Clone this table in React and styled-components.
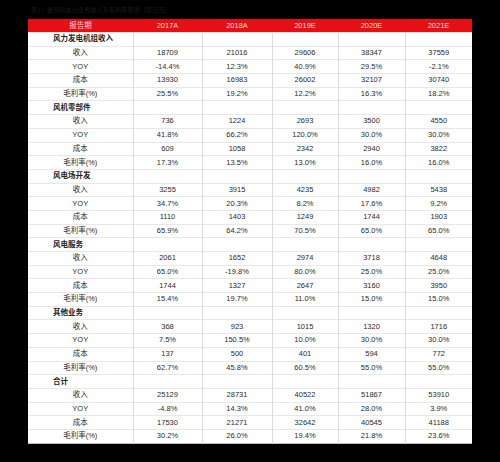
import React from "react"
import styled, { createGlobalStyle } from "styled-components"

const GlobalStyle = createGlobalStyle`
html, body {
  margin: 0;
  padding: 0;
  background: #000;
}
body {
  font-family: "Liberation Sans", "Noto Sans CJK SC", sans-serif;
}
`

const years = ["2017A", "2018A", "2019E", "2020E", "2021E"]
const colWidths = [105, 69, 70, 66, 67, 67]

const sections = [
  {
    name: "风力发电机组收入",
    rows: [
      ["收入", "18709", "21016", "29606", "38347", "37559"],
      ["YOY", "-14.4%", "12.3%", "40.9%", "29.5%", "-2.1%"],
      ["成本", "13930", "16983", "26002", "32107", "30740"],
      ["毛利率(%)", "25.5%", "19.2%", "12.2%", "16.3%", "18.2%"],
    ],
  },
  {
    name: "风机零部件",
    rows: [
      ["收入", "736", "1224", "2693", "3500", "4550"],
      ["YOY", "41.8%", "66.2%", "120.0%", "30.0%", "30.0%"],
      ["成本", "609", "1058", "2342", "2940", "3822"],
      ["毛利率(%)", "17.3%", "13.5%", "13.0%", "16.0%", "16.0%"],
    ],
  },
  {
    name: "风电场开发",
    rows: [
      ["收入", "3255", "3915", "4235", "4982", "5438"],
      ["YOY", "34.7%", "20.3%", "8.2%", "17.6%", "9.2%"],
      ["成本", "1110", "1403", "1249", "1744", "1903"],
      ["毛利率(%)", "65.9%", "64.2%", "70.5%", "65.0%", "65.0%"],
    ],
  },
  {
    name: "风电服务",
    rows: [
      ["收入", "2061", "1652", "2974", "3718", "4648"],
      ["YOY", "65.0%", "-19.8%", "80.0%", "25.0%", "25.0%"],
      ["成本", "1744", "1327", "2647", "3160", "3950"],
      ["毛利率(%)", "15.4%", "19.7%", "11.0%", "15.0%", "15.0%"],
    ],
  },
  {
    name: "其他业务",
    rows: [
      ["收入", "368", "923", "1015", "1320", "1716"],
      ["YOY", "7.5%", "150.5%", "10.0%", "30.0%", "30.0%"],
      ["成本", "137", "500", "401", "594", "772"],
      ["毛利率(%)", "62.7%", "45.8%", "60.5%", "55.0%", "55.0%"],
    ],
  },
  {
    name: "合计",
    rows: [
      ["收入", "25129", "28731", "40522", "51867", "53910"],
      ["YOY", "-4.8%", "14.3%", "41.0%", "28.0%", "3.9%"],
      ["成本", "17530", "21271", "32642", "40545", "41188"],
      ["毛利率(%)", "30.2%", "26.0%", "19.4%", "21.8%", "23.6%"],
    ],
  },
]

export default function App() {
  return (
    <Page>
      <GlobalStyle />
      <Caption>表1：金风科技分业务收入及毛利率预测（百万元）</Caption>
      <Table>
        <colgroup>
          {colWidths.map((w, i) => (
            <col key={i} style={{ width: w }} />
          ))}
        </colgroup>
        <thead>
          <HeadRow>
            <HeadCell>报告期</HeadCell>
            {years.map((y) => (
              <HeadCell key={y}>{y}</HeadCell>
            ))}
          </HeadRow>
        </thead>
        <tbody>
          {sections.map((s) => (
            <React.Fragment key={s.name}>
              <Row>
                <SectionCell>{s.name}</SectionCell>
                {years.map((y) => (
                  <Cell key={y} />
                ))}
              </Row>
              {s.rows.map((r, i) => (
                <Row key={i}>
                  {r.map((v, j) => (
                    <Cell key={j}>{v}</Cell>
                  ))}
                </Row>
              ))}
            </React.Fragment>
          ))}
        </tbody>
      </Table>
    </Page>
  )
}

const Page = styled.div`
width: 500px;
height: 462px;
background: #000;
padding-left: 28px;
box-sizing: border-box;
`
const Caption = styled.div`
height: 19px;
line-height: 19px;
padding-left: 3px;
font-size: 6.2px;
color: #1c1c1c;
white-space: nowrap;
`
const Table = styled.table`
width: 444px;
border-collapse: collapse;
table-layout: fixed;
background: #fff;
border-bottom: 1px solid #bdbdbd;
`
const HeadRow = styled.tr`
height: 13px;
background: #e50f14;
`
const HeadCell = styled.th`
padding: 0;
font-size: 7.5px;
font-weight: normal;
color: #fbd6d6;
text-align: center;
line-height: 13px;
`
const Row = styled.tr`
height: 13.7px;
`
const Cell = styled.td`
padding: 0;
font-size: 7.5px;
color: #2b2b2b;
text-align: center;
line-height: 12px;
border-top: 1px solid #e8e8e8;
border-left: 1px solid #dcdcdc;
&:first-child {
  border-left: none;
}
`
const SectionCell = styled(Cell)`
text-align: left;
padding-left: 25px;
font-weight: bold;
color: #222;
`
